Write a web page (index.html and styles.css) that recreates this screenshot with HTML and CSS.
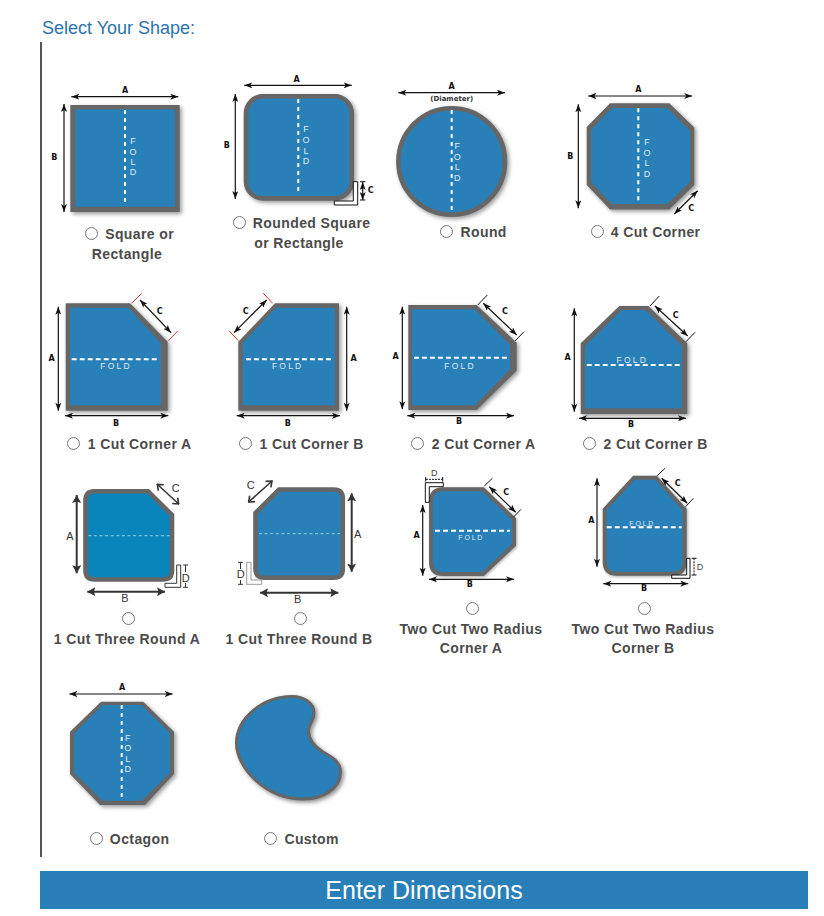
FILE: index.html
```html
<!DOCTYPE html>
<html lang="en">
<head>
<meta charset="utf-8">
<title>Select Your Shape</title>
<link rel="stylesheet" href="styles.css">
</head>
<body>
<svg class="defs" width="0" height="0" aria-hidden="true">
  <defs>
    <marker id="ah" viewBox="0 0 8 6" refX="8" refY="3" markerWidth="8" markerHeight="6" markerUnits="userSpaceOnUse" orient="auto-start-reverse"><path d="M0 0L8 3L0 6L2 3Z" fill="#111"/></marker>
    <marker id="ad" viewBox="0 0 8 9" refX="8" refY="4.5" markerWidth="8" markerHeight="9" markerUnits="userSpaceOnUse" orient="auto-start-reverse"><path d="M0 0L8 4.5L0 9L1.5 4.5Z" fill="#333"/></marker>
    <marker id="ao" viewBox="0 0 7 10" refX="6.5" refY="5" markerWidth="7" markerHeight="10" markerUnits="userSpaceOnUse" orient="auto-start-reverse"><path d="M1 1L6 5L1 9" fill="none" stroke="#333" stroke-width="1.6"/></marker>
  </defs>
</svg>
<main class="page">
  <h2 class="title">Select Your Shape:</h2>
  <section class="shapes">

    <div class="shape">
      <svg class="pic" width="172" height="154" viewBox="42 70 172 154">
        <rect class="edge" x="70.3" y="105" width="109.4" height="107"/>
        <rect class="water" x="75.3" y="109.3" width="99.7" height="97.4"/>
        <line class="dash" x1="125" y1="110" x2="125" y2="206"/>
        <text class="fold" x="133 133 133 133" y="141 152 162 172">FOLD</text>
        <line class="arr" x1="71.3" y1="96.7" x2="178.3" y2="96.7" marker-start="url(#ah)" marker-end="url(#ah)"/>
        <line class="arr" x1="64" y1="104" x2="64" y2="212" marker-start="url(#ah)" marker-end="url(#ah)"/>
        <text class="dim" x="125" y="90">A</text>
        <text class="dim" x="54.3" y="157">B</text>
      </svg>
      <label class="name"><input type="radio" name="shape"> Square or<br>Rectangle</label>
    </div>

    <div class="shape">
      <svg class="pic" width="172" height="143" viewBox="214 70 172 143">
        <rect class="rim" x="246" y="96.3" width="105.7" height="102.1" rx="17"/>
        <line class="dash" x1="298.3" y1="99" x2="298.3" y2="194"/>
        <text class="fold" x="306 306 306 306" y="129.3 140 150.7 161.3">FOLD</text>
        <polygon class="brk" points="353.3,181.7 357.7,181.7 357.7,205 334.3,205 334.3,201 353.3,201"/>
        <line class="arr" x1="244.3" y1="85.3" x2="351.7" y2="85.3" marker-start="url(#ah)" marker-end="url(#ah)"/>
        <line class="arr" x1="235.3" y1="94" x2="235.3" y2="199" marker-start="url(#ah)" marker-end="url(#ah)"/>
        <path class="tick" d="M360 181.7H365.4M360 200H365.4"/>
        <line class="arr" x1="362.7" y1="182" x2="362.7" y2="200" marker-start="url(#ah)" marker-end="url(#ah)"/>
        <text class="dim" x="296.7" y="79">A</text>
        <text class="dim" x="226.7" y="145">B</text>
        <text class="dim" x="370.7" y="190.3">C</text>
      </svg>
      <label class="name"><input type="radio" name="shape"> Rounded Square<br>or Rectangle</label>
    </div>

    <div class="shape">
      <svg class="pic" width="172" height="152" viewBox="386 70 172 152">
        <circle class="rim" cx="451.7" cy="161.5" r="53.3"/>
        <line class="dash" x1="451.7" y1="110" x2="451.7" y2="212.7"/>
        <text class="fold" x="457.3 457.3 457.3 457.3" y="146 156.7 167.3 178">FOLD</text>
        <line class="arr" x1="398.3" y1="92.7" x2="505" y2="92.7" marker-start="url(#ah)" marker-end="url(#ah)"/>
        <text class="dim" x="451.7" y="86">A</text>
        <text class="dim dim-sm" x="451.7" y="99">(Diameter)</text>
      </svg>
      <label class="name"><input type="radio" name="shape"> Round</label>
    </div>

    <div class="shape">
      <svg class="pic" width="172" height="152" viewBox="558 70 172 152">
        <polygon class="edge" points="610,103.3 669.3,103.3 694.3,127.5 694.3,185 669.3,209.5 610,209.5 586.7,185 586.7,127"/>
        <polygon class="water" points="612,108 667,108 690,131 690,182 667,204 612,204 591,182 591,130"/>
        <line class="dash" x1="638.3" y1="108.3" x2="638.3" y2="203.3"/>
        <text class="fold" x="647 647 647 647" y="142 152.7 163.3 173.7">FOLD</text>
        <line class="arr" x1="588.3" y1="96" x2="692.3" y2="96" marker-start="url(#ah)" marker-end="url(#ah)"/>
        <line class="arr" x1="578.3" y1="104.3" x2="578.3" y2="208.3" marker-start="url(#ah)" marker-end="url(#ah)"/>
        <line class="arr" x1="697.7" y1="190.7" x2="674.3" y2="214" marker-start="url(#ah)" marker-end="url(#ah)"/>
        <text class="dim" x="638.3" y="89">A</text>
        <text class="dim" x="570.3" y="156.3">B</text>
        <text class="dim" x="691.3" y="208.7">C</text>
      </svg>
      <label class="name"><input type="radio" name="shape"> 4 Cut Corner</label>
    </div>

    <div class="shape">
      <svg class="pic" width="172" height="149" viewBox="42 285 172 149">
        <polygon class="edge" points="65.7,303.3 130,303.3 167.7,341.7 167.7,410.7 65.7,410.7"/>
        <polygon class="water" points="70,307.7 128.3,307.7 161,343.3 161,405.3 70,405.3"/>
        <line class="dash dash-h" x1="71.7" y1="359.3" x2="158.3" y2="359.3"/>
        <text class="fold fold-h" x="116" y="366">FOLD</text>
        <line class="arr" x1="58.3" y1="306.7" x2="58.3" y2="410.7" marker-start="url(#ah)" marker-end="url(#ah)"/>
        <line class="arr" x1="65" y1="415.7" x2="168.3" y2="415.7" marker-start="url(#ah)" marker-end="url(#ah)"/>
        <line class="arr" x1="140" y1="300" x2="171" y2="332.7" marker-start="url(#ah)" marker-end="url(#ah)"/>
        <path class="tick tick-red" d="M131.7 303.3L141.7 293.3M168.3 340.7L177.7 331"/>
        <text class="dim" x="51.7" y="358">A</text>
        <text class="dim" x="116" y="423.3">B</text>
        <text class="dim" x="159.7" y="311">C</text>
      </svg>
      <label class="name"><input type="radio" name="shape"> 1 Cut Corner A</label>
    </div>

    <div class="shape">
      <svg class="pic" width="172" height="149" viewBox="214 285 172 149">
        <polygon class="edge" points="275,303.3 339,303.3 339,410.7 238.3,410.7 238.3,341.7"/>
        <polygon class="water" points="276,307.7 335,307.7 335,405.3 242.7,405.3 242.7,343.3"/>
        <line class="dash dash-h" x1="246" y1="359.3" x2="333.3" y2="359.3"/>
        <text class="fold fold-h" x="287.7" y="366">FOLD</text>
        <line class="arr" x1="346.7" y1="306.7" x2="346.7" y2="410.7" marker-start="url(#ah)" marker-end="url(#ah)"/>
        <line class="arr" x1="236.7" y1="415.7" x2="340" y2="415.7" marker-start="url(#ah)" marker-end="url(#ah)"/>
        <line class="arr" x1="266.7" y1="300" x2="234" y2="332.7" marker-start="url(#ah)" marker-end="url(#ah)"/>
        <path class="tick tick-red" d="M263.3 293.3L272.7 303.3M229 330.7L238.3 340.7"/>
        <text class="dim" x="353.7" y="358">A</text>
        <text class="dim" x="287.7" y="423.3">B</text>
        <text class="dim" x="245.7" y="311">C</text>
      </svg>
      <label class="name"><input type="radio" name="shape"> 1 Cut Corner B</label>
    </div>

    <div class="shape">
      <svg class="pic" width="172" height="149" viewBox="386 285 172 149">
        <polygon class="edge" points="408.3,305 476.7,305 516.7,342.7 516.7,370.7 476.7,410 408.3,410"/>
        <polygon class="water" points="412,309.3 475,309.3 510,345 510,369.3 475,405.3 412,405.3"/>
        <line class="dash dash-h" x1="414" y1="357.7" x2="509.3" y2="357.7"/>
        <text class="fold fold-h" x="460" y="366">FOLD</text>
        <line class="arr" x1="402.3" y1="306.7" x2="402.3" y2="409.3" marker-start="url(#ah)" marker-end="url(#ah)"/>
        <line class="arr" x1="407.3" y1="415.7" x2="514" y2="415.7" marker-start="url(#ah)" marker-end="url(#ah)"/>
        <line class="arr" x1="483.3" y1="303.3" x2="516.7" y2="335" marker-start="url(#ah)" marker-end="url(#ah)"/>
        <path class="tick" d="M477.7 305L487.3 295M515 341L524 331.7"/>
        <text class="dim" x="395.7" y="356">A</text>
        <text class="dim" x="459" y="421.7">B</text>
        <text class="dim" x="505" y="311.7">C</text>
      </svg>
      <label class="name"><input type="radio" name="shape"> 2 Cut Corner A</label>
    </div>

    <div class="shape">
      <svg class="pic" width="172" height="149" viewBox="558 285 172 149">
        <polygon class="edge" points="619.3,306 648.3,306 687.3,343.3 687.3,414 580.7,414 580.7,343.3"/>
        <polygon class="water" points="621.7,310 645.7,310 681.7,346 681.7,408.3 585,408.3 585,346"/>
        <line class="dash dash-h" x1="586.7" y1="365" x2="681.7" y2="365"/>
        <text class="fold fold-h" x="632.3" y="360">FOLD</text>
        <line class="arr" x1="574.3" y1="308.3" x2="574.3" y2="411.7" marker-start="url(#ah)" marker-end="url(#ah)"/>
        <line class="arr" x1="579" y1="418.3" x2="686" y2="418.3" marker-start="url(#ah)" marker-end="url(#ah)"/>
        <line class="arr" x1="655" y1="306" x2="687.7" y2="336" marker-start="url(#ah)" marker-end="url(#ah)"/>
        <path class="tick" d="M650 306L659.3 296M686 341.7L695 332.3"/>
        <text class="dim" x="567.7" y="357.3">A</text>
        <text class="dim" x="631" y="424">B</text>
        <text class="dim" x="675.7" y="315">C</text>
      </svg>
      <label class="name"><input type="radio" name="shape"> 2 Cut Corner B</label>
    </div>

    <div class="shape">
      <svg class="pic" width="172" height="145" viewBox="42 464 172 145">
        <path class="rim-flat rim-teal" d="M94.5,491.2 H148 L172,515 V570.5 Q172,579.5 163,579.5 H94.5 Q85.5,579.5 85.5,570.5 V500.2 Q85.5,491.2 94.5,491.2Z"/>
        <line class="dash-thin" x1="88.3" y1="535.7" x2="170" y2="535.7"/>
        <polygon class="brk brk-dark" points="176.7,565 180.7,565 180.7,587.3 165,587.3 165,583.3 176.7,583.3"/>
        <line class="arr-bold" x1="76.7" y1="495" x2="76.7" y2="573.3" marker-start="url(#ad)" marker-end="url(#ad)"/>
        <line class="arr-bold" x1="87.3" y1="591.7" x2="165" y2="591.7" marker-start="url(#ad)" marker-end="url(#ad)"/>
        <line class="arr-bold arr-open" x1="157" y1="484" x2="179" y2="504.3" marker-start="url(#ao)" marker-end="url(#ao)"/>
        <path class="tick tick-thin" d="M183 565H188M185.5 565V572M185.5 583V587.3M183 587.3H188"/>
        <text class="dim-plain" x="70" y="536">A</text>
        <text class="dim-plain" x="125" y="597.7">B</text>
        <text class="dim-plain" x="175.7" y="488.3">C</text>
        <text class="dim-plain" x="185.7" y="577.7">D</text>
      </svg>
      <label class="name"><input type="radio" name="shape"><br>1 Cut Three Round A</label>
    </div>

    <div class="shape">
      <svg class="pic" width="172" height="145" viewBox="214 464 172 145">
        <path class="rim-flat" d="M279,489.5 H333.8 Q342.8,489.5 342.8,498.5 V568.8 Q342.8,577.8 333.8,577.8 H264.5 Q255.5,577.8 255.5,568.8 V513 Z"/>
        <line class="dash-thin" x1="259" y1="533.7" x2="340" y2="533.7"/>
        <polygon class="brk brk-grey" points="246.7,562.3 251,562.3 251,580 261.7,580 261.7,584.3 246.7,584.3"/>
        <line class="arr-bold" x1="351.7" y1="493.3" x2="351.7" y2="571.7" marker-start="url(#ad)" marker-end="url(#ad)"/>
        <line class="arr-bold" x1="260" y1="592.7" x2="338.3" y2="592.7" marker-start="url(#ad)" marker-end="url(#ad)"/>
        <line class="arr-bold arr-open" x1="248.3" y1="502.3" x2="272.3" y2="480.7" marker-start="url(#ao)" marker-end="url(#ao)"/>
        <path class="tick tick-thin" d="M238 562.3H243M240.5 562.3V569M240.5 580V584.3M238 584.3H243"/>
        <text class="dim-plain" x="357.7" y="533.7">A</text>
        <text class="dim-plain" x="297.7" y="599">B</text>
        <text class="dim-plain" x="250.7" y="485">C</text>
        <text class="dim-plain" x="240.7" y="574">D</text>
      </svg>
      <label class="name"><input type="radio" name="shape"><br>1 Cut Three Round B</label>
    </div>

    <div class="shape">
      <svg class="pic" width="172" height="135" viewBox="386 464 172 135">
        <path class="rim-flat rim-thin" d="M443,489.3 H483 L514,519 V545 L483,574 H443 Q431,574 431,562 V501.3 Q431,489.3 443,489.3Z"/>
        <line class="dash dash-h" x1="435" y1="530.7" x2="510" y2="530.7"/>
        <text class="fold fold-h fold-sm" x="471.3" y="537.7">FOLD</text>
        <polygon class="brk" points="425.3,482.7 443.3,482.7 443.3,486.7 429.3,486.7 429.3,502.3 425.3,502.3"/>
        <line class="arr" x1="422.7" y1="505" x2="422.7" y2="575.7" marker-start="url(#ah)" marker-end="url(#ah)"/>
        <line class="arr" x1="429" y1="579.3" x2="514" y2="579.3" marker-start="url(#ah)" marker-end="url(#ah)"/>
        <line class="arr" x1="489.3" y1="486.7" x2="515.7" y2="512.3" marker-start="url(#ah)" marker-end="url(#ah)"/>
        <line class="arr arr-sm" x1="426" y1="479.3" x2="442.7" y2="479.3"/>
        <path class="tick" d="M425.7 477V481.6M442.7 477V481.6M484.3 486L492.3 478.3M513.3 517.3L521 509.3"/>
        <text class="dim" x="416.7" y="535.7">A</text>
        <text class="dim" x="469.7" y="584.3">B</text>
        <text class="dim" x="506.3" y="492.3">C</text>
        <text class="dim-tiny" x="434.3" y="473.3">D</text>
      </svg>
      <label class="name"><input type="radio" name="shape"><br>Two Cut Two Radius<br>Corner A</label>
    </div>

    <div class="shape">
      <svg class="pic" width="172" height="135" viewBox="558 464 172 135">
        <path class="rim-flat rim-thin" d="M634,477.7 H656 L684.7,509.5 V561.7 Q684.7,573.7 672.7,573.7 H616.7 Q604.7,573.7 604.7,561.7 V509.5 Z"/>
        <line class="dash dash-h" x1="606.7" y1="527.3" x2="681.7" y2="527.3"/>
        <text class="fold fold-h fold-sm" x="642.3" y="523">FOLD</text>
        <polygon class="brk" points="686.7,558.3 690,558.3 690,578.3 671.7,578.3 671.7,575 686.7,575"/>
        <line class="arr" x1="597" y1="478.3" x2="597" y2="566.7" marker-start="url(#ah)" marker-end="url(#ah)"/>
        <line class="arr" x1="603.3" y1="583.7" x2="688.3" y2="583.7" marker-start="url(#ah)" marker-end="url(#ah)"/>
        <line class="arr" x1="661.7" y1="478.3" x2="687.3" y2="503.3" marker-start="url(#ah)" marker-end="url(#ah)"/>
        <line class="arr arr-sm" x1="694" y1="558.3" x2="694" y2="575"/>
        <path class="tick" d="M691.5 558.3H696.5M691.5 575H696.5M657.3 475.7L665 468.3M685.7 506.7L693.3 498.3"/>
        <text class="dim" x="591.3" y="520">A</text>
        <text class="dim" x="644" y="588.7">B</text>
        <text class="dim" x="677.7" y="483.3">C</text>
        <text class="dim-tiny" x="700" y="566.7">D</text>
      </svg>
      <label class="name"><input type="radio" name="shape"><br>Two Cut Two Radius<br>Corner B</label>
    </div>

    <div class="shape">
      <svg class="pic" width="172" height="154" viewBox="42 675 172 154">
        <polygon class="edge" points="101,701.7 143.3,701.7 174,731.7 174,774 145,805 100,805 70,774 70,731.7"/>
        <polygon class="water" points="102.7,705 141.7,705 170,733.3 170,772.7 141.7,800.7 102.7,800.7 74.3,772.7 74.3,733.3"/>
        <line class="dash" x1="121.7" y1="705" x2="121.7" y2="800"/>
        <text class="fold" x="127.7 127.7 127.7 127.7" y="737.7 748 758.7 769">FOLD</text>
        <line class="arr" x1="69.3" y1="694" x2="172.7" y2="694" marker-start="url(#ah)" marker-end="url(#ah)"/>
        <text class="dim" x="122" y="687.3">A</text>
      </svg>
      <label class="name"><input type="radio" name="shape"> Octagon</label>
    </div>

    <div class="shape">
      <svg class="pic" width="172" height="154" viewBox="214 675 172 154">
        <path class="rim-flat rim-soft" d="M292,696.5 C304,696.5 314,703 314,713 C314,722 308.5,723 308.5,731 C308.5,741 315,747 323,752 C334,758 340.5,763 340.5,772 C340.5,789 322,799 303,799 C266,799 236.5,768 236.5,743 C236.5,719 262,696.5 292,696.5Z"/>
      </svg>
      <label class="name"><input type="radio" name="shape"> Custom</label>
    </div>

  </section>
  <h2 class="bar">Enter Dimensions</h2>
</main>
</body>
</html>
```
FILE: styles.css
```css
html, body {
  margin: 0;
  padding: 0;
  background: #fff;
  font-family: "Liberation Sans", Arial, sans-serif;
}

.defs {
  position: absolute;
}

.page {
  padding: 18px 16px 7px 40px;
}

.title {
  margin: 0 0 3px;
  padding-left: 2px;
  font-size: 18px;
  line-height: 21px;
  font-weight: 400;
  color: #2a73ad;
}

.shapes {
  display: grid;
  grid-template-columns: repeat(4, 172px);
  grid-template-rows: 215px 179px 211px 182px;
  align-items: start;
  padding-top: 28px;
  border-left: 2px solid #555;
}

.pic {
  display: block;
  overflow: visible;
}

.name {
  display: block;
  padding-right: 2px;
  text-align: center;
  font-size: 14px;
  font-weight: 700;
  line-height: 19.6px;
  letter-spacing: 0.4px;
  color: #4b4b4b;
}

.name input {
  vertical-align: -1px;
}

.edge {
  fill: #666;
  filter: drop-shadow(2px 2px 2px rgba(0, 0, 0, 0.4));
}

.water {
  fill: #2980b9;
}

.rim, .rim-flat {
  fill: #2980b9;
  stroke: #666;
  stroke-width: 4.6;
  filter: drop-shadow(2px 2px 2px rgba(0, 0, 0, 0.4));
}

.rim-flat {
  filter: none;
}

.rim-teal {
  fill: #0a85bb;
}

.rim-thin {
  stroke-width: 4;
  filter: drop-shadow(1.5px 1.5px 1.5px rgba(0, 0, 0, 0.35));
}

.rim-soft {
  stroke-width: 3;
  filter: drop-shadow(2px 2px 2px rgba(0, 0, 0, 0.45));
}

.dash {
  stroke: #fff;
  stroke-width: 2;
  stroke-dasharray: 4 4;
}

.dash-h {
  stroke-dasharray: 5 3;
}

.dash-thin {
  stroke: #8fd0e6;
  stroke-width: 1;
  stroke-dasharray: 3 2.6;
}

.fold {
  fill: #dfecf5;
  font-family: "Liberation Sans", Arial, sans-serif;
  font-size: 9px;
  text-anchor: middle;
  dominant-baseline: central;
}

.fold-h {
  letter-spacing: 2.2px;
  font-size: 8.5px;
}

.fold-sm {
  letter-spacing: 1.8px;
  font-size: 7px;
}

.arr {
  stroke: #111;
  stroke-width: 1.2;
}

.arr-sm {
  stroke-width: 1;
  stroke-dasharray: 2 1;
}

.arr-bold {
  stroke: #333;
  stroke-width: 2;
}

.arr-open {
  stroke-width: 1.5;
}

.tick {
  fill: none;
  stroke: #111;
  stroke-width: 1;
}

.tick-red {
  stroke: #c8322c;
}

.tick-thin {
  stroke: #333;
}

.brk {
  fill: #fff;
  stroke: #111;
  stroke-width: 1;
}

.brk-dark {
  stroke: #333;
}

.brk-grey {
  stroke: #999;
}

.dim {
  fill: #111;
  font-family: "DejaVu Sans", sans-serif;
  font-size: 8px;
  font-weight: 700;
  text-anchor: middle;
  dominant-baseline: central;
}

.dim-sm {
  font-size: 7px;
  fill: #333;
}

.dim-plain {
  fill: #333;
  font-family: "Liberation Sans", Arial, sans-serif;
  font-size: 11px;
  text-anchor: middle;
  dominant-baseline: central;
}

.dim-tiny {
  fill: #444;
  font-family: "Liberation Sans", Arial, sans-serif;
  font-size: 9px;
  text-anchor: middle;
  dominant-baseline: central;
}

.bar {
  margin: 14px 0 0;
  background: #2980b9;
  color: #fff;
  text-align: center;
  font-size: 25px;
  font-weight: 400;
  line-height: 38px;
}
```
